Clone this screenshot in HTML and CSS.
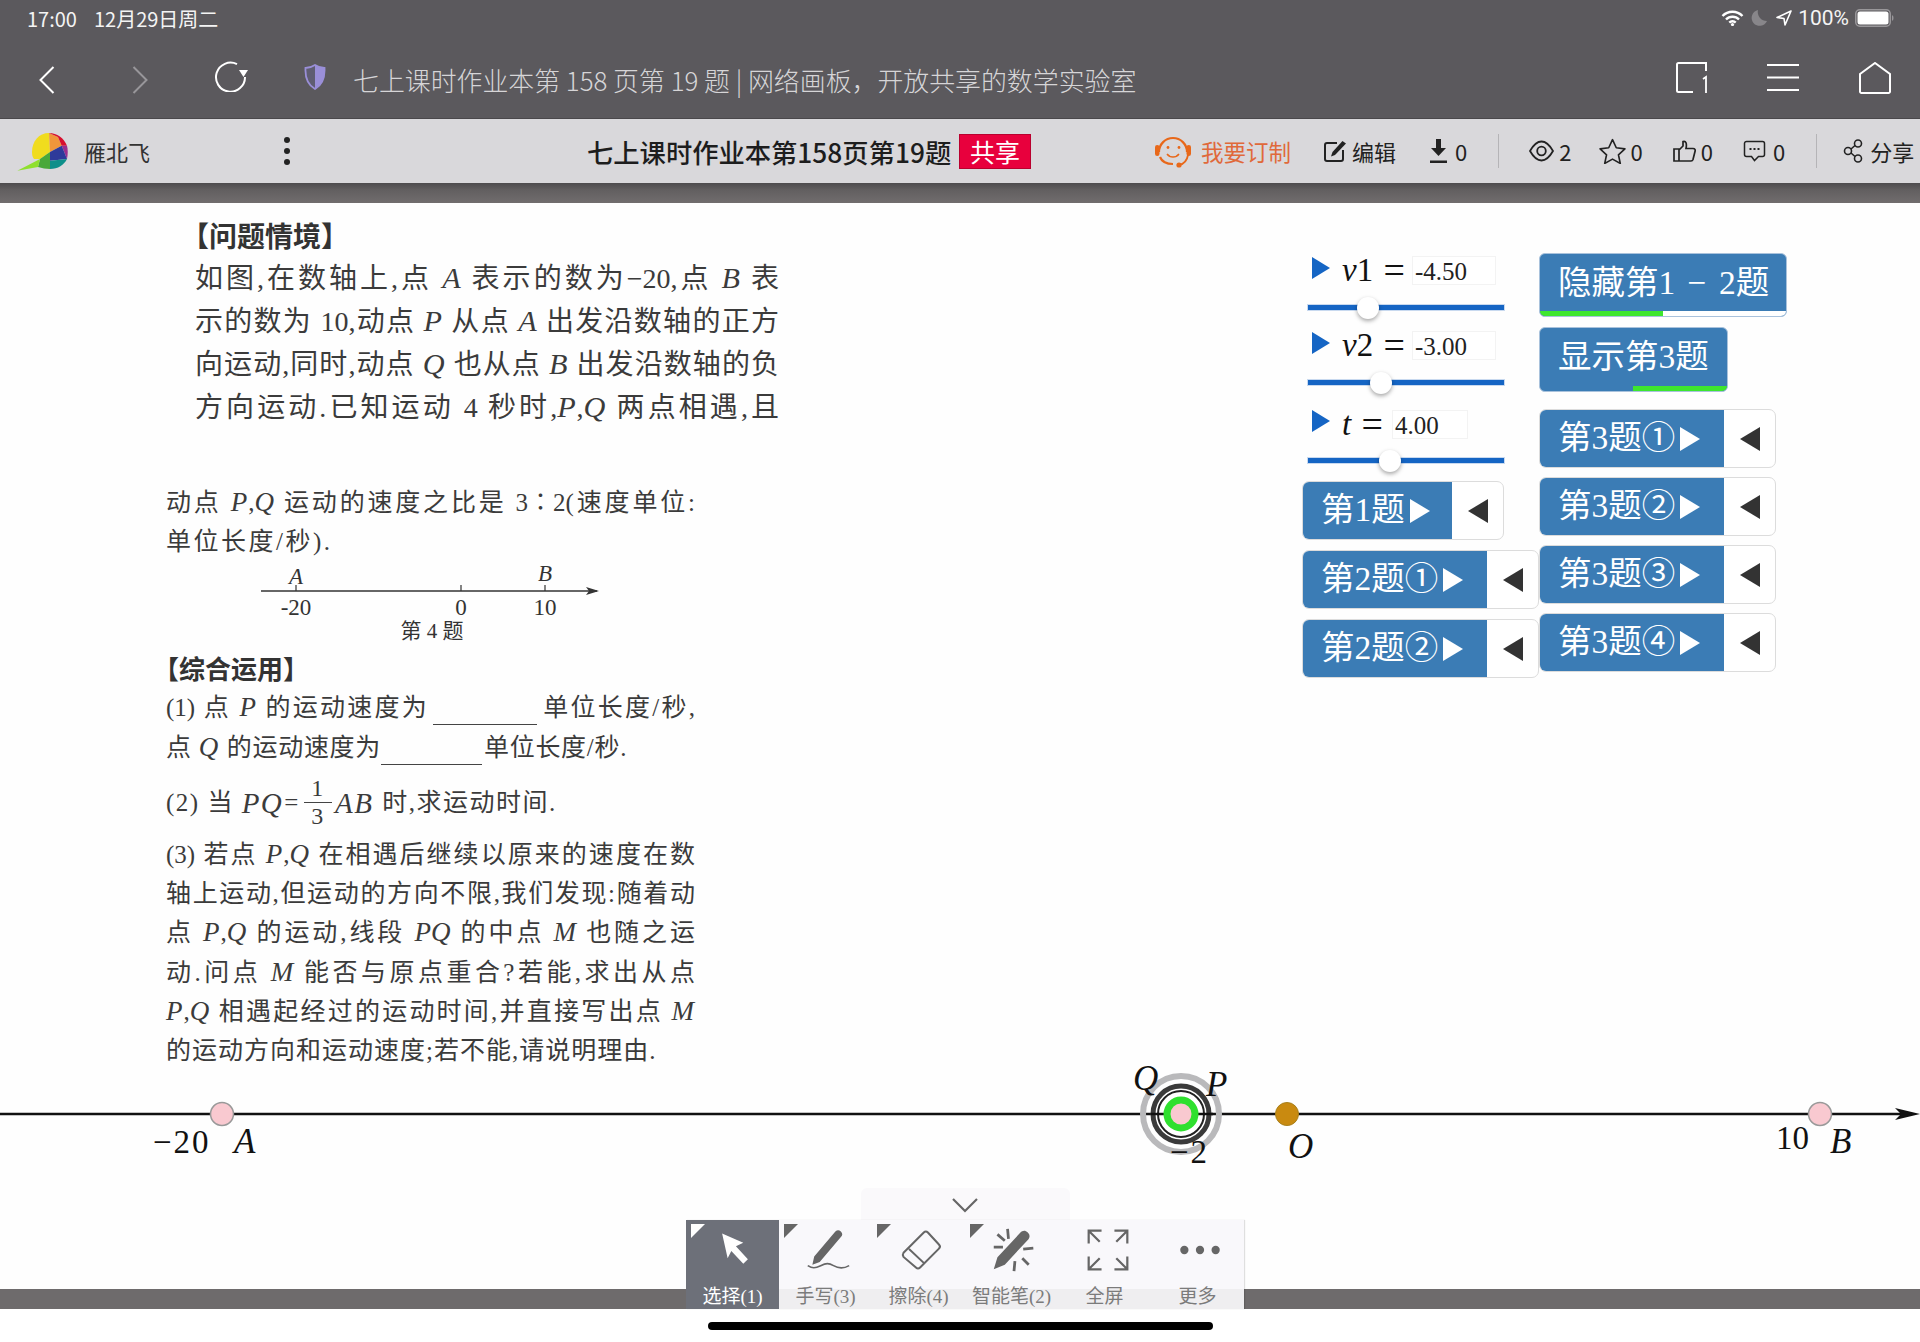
FILE: index.html
```html
<!DOCTYPE html>
<html lang="zh-CN">
<head>
<meta charset="utf-8">
<title>七上课时作业本第158页第19题</title>
<link rel="stylesheet" href="styles.css">
</head>
<body>
<div class="page">
  <header class="browser">
    <div class="status">
      <span class="clock">17:00</span><span class="date">12月29日周二</span>
      <span class="status-right">
        <svg class="ic-wifi" viewBox="0 0 23 16"><path d="M1.500 6a14 14 0 0 1 20 0M5 9.500a9 9 0 0 1 13 0M8.300 12.600a4.500 4.500 0 0 1 6.400 0" fill="none" stroke="#fff" stroke-width="2.400"/><circle cx="11.500" cy="14.500" r="1.600" fill="#fff"/></svg>
        <svg class="ic-moon" viewBox="0 0 16 16"><path d="M7 0a8 8 0 1 0 9 11A9 9 0 0 1 7 0z" fill="#88868a"/></svg>
        <svg class="ic-loc" viewBox="0 0 16 16"><path d="M15 1 1 7.500 8 8.500 9 15z" fill="none" stroke="#fff" stroke-width="1.600" stroke-linejoin="round"/></svg>
        <span class="pct">100%</span>
        <svg class="ic-bat" viewBox="0 0 39 18"><rect x=".75" y=".75" width="34.500" height="16.500" rx="4" fill="none" stroke="#99979a" stroke-width="1.500"/><rect x="2.500" y="2.500" width="31" height="13" rx="2.500" fill="#fff"/><path d="M37 6v6a3 3 0 0 0 1.500-3A3 3 0 0 0 37 6z" fill="#99979a"/></svg>
      </span>
    </div>
    <nav class="nav">
      <svg class="ic-back" viewBox="0 0 16 28"><path d="M14.500 1 1.500 14l13 13" fill="none" stroke="#fff" stroke-width="2"/></svg>
      <svg class="ic-forward" viewBox="0 0 16 28"><path d="M1.500 1l13 13-13 13" fill="none" stroke="#98969a" stroke-width="2"/></svg>
      <svg class="ic-reload" viewBox="0 0 34 32"><path d="M23 4.200A14.500 14.500 0 1 0 31 17" fill="none" stroke="#fff" stroke-width="2"/><path d="M25 10h9l-4.500 7z" fill="#fff"/></svg>
      <svg class="ic-shield" viewBox="0 0 22 26"><path d="M11 1C8 3 4 4 1.500 4 1 13 4 21 11 25c7-4 10-12 9.500-21C18 4 14 3 11 1z" fill="#5f5d72" stroke="#9a8fd8" stroke-width="1.800"/><path d="M11 1c3 2 7 3 9.500 3 .5 9-2.500 17-9.500 21z" fill="#9a8fd8"/></svg>
      <span class="page-title">七上课时作业本第 158 页第 19 题 | 网络画板&#xFF0C;开放共享的数学实验室</span>
      <span class="nav-right">
        <svg class="ic-tabs" viewBox="0 0 31 31"><path d="M30 9V1H2.500A1.500 1.500 0 0 0 1 2.500v26A1.500 1.500 0 0 0 2.500 30H17" fill="none" stroke="#fff" stroke-width="2"/><path d="M27 17l3-2v16" fill="none" stroke="#fff" stroke-width="1.800"/></svg>
        <svg class="ic-menu" viewBox="0 0 32 27"><path d="M0 1h32M0 13.500h32M0 26h32" stroke="#fff" stroke-width="2"/></svg>
        <svg class="ic-home" viewBox="0 0 32 32"><path d="M1 12 16 1l15 11v17.500a1.500 1.500 0 0 1-1.500 1.500h-27A1.500 1.500 0 0 1 1 29.500z" fill="none" stroke="#fff" stroke-width="2"/></svg>
      </span>
    </nav>
  </header>

  <div class="appbar">
    <div class="user">
      <svg class="logo" viewBox="0 0 51 39">
        <path d="M32 1C22 1 15 9 15 20c0 3 .5 5 2 7h6l10-7z" fill="#f0dc1e"/>
        <path d="M32 1l9 4 3.700 8.700L33 20z" fill="#f0963a"/>
        <path d="M32 1c8 0 15 5 18 12.700h-5.300L41 5z" fill="#d8102e"/>
        <path d="M44.700 13.700H50c1 3.300 1 8.300 0 13.300z" fill="#9a2f8f"/>
        <path d="M33 20l11.700-6.300L50 27l-17 1.700z" fill="#2e3a9a"/>
        <path d="M33 28.700 50 27c-3 6-9 10-17 10z" fill="#0d8f8a"/>
        <path d="M23 27l10-7v17c-4 0-8-1-12-2z" fill="#4aa83a"/>
        <path d="M.3 38.700 23 27l-2 8z" fill="#8fe02e"/>
      </svg>
      <span class="username">雁北飞</span>
      <span class="kebab"><i></i><i></i><i></i></span>
    </div>
    <h1 class="app-title">七上课时作业本第158页第19题</h1>
    <span class="badge">共享</span>
    <div class="tools">
      <svg class="ic-face" viewBox="0 0 38 33"><path d="M5 17A14 14 0 1 1 33 17M6 22c2 5 7 7 13 7" fill="none" stroke="#e8681a" stroke-width="2.200"/><path d="M34 20c-1 6-4 9-9 10" fill="none" stroke="#e8681a" stroke-width="1.800"/><rect x="1" y="10" width="4.500" height="11" rx="2.200" fill="#e8681a"/><rect x="32.500" y="10" width="4.500" height="11" rx="2.200" fill="#e8681a"/><circle cx="25" cy="30" r="2.600" fill="#e8681a"/><circle cx="14" cy="12.500" r="1.400" fill="#e8681a"/><circle cx="25" cy="12.500" r="1.400" fill="#e8681a"/><path d="M13 19c3 4 9 4 12 0" fill="none" stroke="#e8681a" stroke-width="1.500"/></svg>
      <span class="custom">我要订制</span>
      <span class="tool edit">
        <svg viewBox="0 0 22 21"><path d="M13 2H3a2 2 0 0 0-2 2v14a2 2 0 0 0 2 2h14a2 2 0 0 0 2-2V9" fill="none" stroke="#222" stroke-width="2"/><path d="M18.500 0 22 2.500 11 14l-4 1.500L8.500 11z" fill="#222"/></svg>
        编辑
      </span>
      <span class="tool dl">
        <svg viewBox="0 0 17 24"><path d="M6 0h5v9h5l-7.500 8L1 9h5zM0 21.500h17V24H0z" fill="#222"/></svg>
        0
      </span>
      <span class="vline"></span>
      <span class="tool stat eye">
        <svg viewBox="0 0 25 22"><path d="M1 11C5 4 8.500 1.500 12.500 1.500S20 4 24 11c-4 7-7.500 9.500-11.500 9.500S5 18 1 11z" fill="none" stroke="#222" stroke-width="1.800" stroke-linejoin="round"/><circle cx="12.500" cy="11" r="4.300" fill="none" stroke="#222" stroke-width="1.800"/></svg>
        2
      </span>
      <span class="tool stat star">
        <svg viewBox="0 0 25 24"><path d="M12.500 1.500 16 9l8 1-6 5.500 1.700 8-7.200-4-7.200 4 1.700-8-6-5.500 8-1z" fill="none" stroke="#222" stroke-width="1.500" stroke-linejoin="round"/></svg>
        0
      </span>
      <span class="tool stat like">
        <svg viewBox="0 0 23 22"><path d="M1 9h5v12H1zM6 10l4-4V1.500c3-1 4 2 3 7h7c2 0 2.500 1.500 2 3l-2 8c-.3 1-1 1.500-2 1.500H6" fill="none" stroke="#222" stroke-width="1.700"/></svg>
        0
      </span>
      <span class="tool stat comment">
        <svg viewBox="0 0 22 22"><path d="M3 1.500h16A2 2 0 0 1 21 3.500v11a2 2 0 0 1-2 2h-4l-4 4-3-4H3a2 2 0 0 1-2-2v-11a2 2 0 0 1 2-2z" fill="none" stroke="#222" stroke-width="1.500"/><path d="M6 9h2M10 9h2M14 9h2" stroke="#222" stroke-width="1.800"/></svg>
        0
      </span>
      <span class="vline"></span>
      <span class="tool share">
        <svg viewBox="0 0 21 24"><circle cx="15" cy="4.500" r="3.500" fill="none" stroke="#222" stroke-width="1.600"/><circle cx="5" cy="12" r="3.500" fill="none" stroke="#222" stroke-width="1.600"/><circle cx="15" cy="19.500" r="3.500" fill="none" stroke="#222" stroke-width="1.600"/><path d="M8 10 12 6.500M8 14l4 3.500" stroke="#222" stroke-width="1.600"/></svg>
        分享
      </span>
    </div>
  </div>
  <div class="strip"></div>

  <main class="canvas">
    <section class="book">
      <div class="intro">
        <h2 class="sec big">【问题情境】</h2>
        <p class="jl">如图,在数轴上,点 <i>A</i> 表示的数为−20,点 <i>B</i> 表</p>
        <p class="jl">示的数为 10,动点 <i>P</i> 从点 <i>A</i> 出发沿数轴的正方</p>
        <p class="jl">向运动,同时,动点 <i>Q</i> 也从点 <i>B</i> 出发沿数轴的负</p>
        <p class="jl">方向运动.已知运动 4 秒时,<i>P</i>,<i>Q</i> 两点相遇,且</p>
      </div>
      <div class="body">
        <p class="jl first">动点 <i>P</i>,<i>Q</i> 运动的速度之比是 3∶2(速度单位:</p>
        <p class="wider">单位长度/秒).</p>
        <svg class="figure" viewBox="0 563 560 82">
          <path d="M95 592H431" stroke="#333" stroke-width="1.500"/>
          <path d="M130 592v-6M295 592v-6M379 592v-6" stroke="#333" stroke-width="1.200"/>
          <path d="M433 592l-13-4 3 4-3 4z" fill="#333"/>
          <text class="fig it" x="130" y="585" text-anchor="middle">A</text>
          <text class="fig it" x="379" y="582" text-anchor="middle">B</text>
          <text class="fig" x="130" y="616" text-anchor="middle">-20</text>
          <text class="fig" x="295" y="616" text-anchor="middle">0</text>
          <text class="fig" x="379" y="616" text-anchor="middle">10</text>
          <text class="fig cap" x="266" y="639" text-anchor="middle">第 4 题</text>
        </svg>
        <h2 class="sec">【综合运用】</h2>
        <p class="jl q1">(1) 点 <i>P</i> 的运动速度为<span class="blank b1"></span>单位长度/秒,</p>
        <p class="q1b">点 <i>Q</i> 的运动速度为<span class="blank b2"></span>单位长度/秒.</p>
        <p class="q2">(2) 当 <i>PQ</i>=<span class="frac"><span>1</span><span>3</span></span><i>AB</i> 时,求运动时间.</p>
        <div class="q3">
          <p class="jl">(3) 若点 <i>P</i>,<i>Q</i> 在相遇后继续以原来的速度在数</p>
          <p class="jl">轴上运动,但运动的方向不限,我们发现:随着动</p>
          <p class="jl">点 <i>P</i>,<i>Q</i> 的运动,线段 <i>PQ</i> 的中点 <i>M</i> 也随之运</p>
          <p class="jl">动.问点 <i>M</i> 能否与原点重合?若能,求出从点</p>
          <p class="jl"><i>P</i>,<i>Q</i> 相遇起经过的运动时间,并直接写出点 <i>M</i></p>
          <p class="loose">的运动方向和运动速度;若不能,请说明理由.</p>
        </div>
      </div>
    </section>

    <svg class="axis" viewBox="0 203 1920 1106">
      <path d="M0 1114H1905" stroke="#111" stroke-width="2.500"/>
      <path d="M1920 1114l-25-6 6 6-6 6z" fill="#111"/>
      <circle cx="222" cy="1114" r="11.500" fill="#f9c9d0" stroke="#999" stroke-width="1.500"/>
      <circle cx="1820" cy="1114" r="11.500" fill="#f9c9d0" stroke="#999" stroke-width="1.500"/>
      <circle cx="1287" cy="1114" r="11.500" fill="#c98a10" stroke="#a8801c" stroke-width="1"/>
      <circle cx="1181" cy="1114" r="38" fill="none" stroke="#b9b9bb" stroke-width="6"/>
      <circle cx="1181" cy="1114" r="28" fill="#fff" stroke="#3a3a3a" stroke-width="5"/>
      <circle cx="1181" cy="1114" r="23" fill="#fff" stroke="#222" stroke-width="2"/>
      <path d="M1151 1114H1213" stroke="#111" stroke-width="2.500"/>
      <circle cx="1181" cy="1114" r="14" fill="#f9c9d0" stroke="#2fe02f" stroke-width="7"/>
      <text class="lb neg" x="153" y="1153">−20</text>
      <text class="lb it" x="234" y="1153">A</text>
      <text class="lb it" x="1133" y="1090">Q</text>
      <text class="lb it" x="1206" y="1096">P</text>
      <text class="lb neg" x="1170" y="1163">−2</text>
      <text class="lb it" x="1288" y="1158">O</text>
      <text class="lb" x="1776" y="1149">10</text>
      <text class="lb it" x="1830" y="1153">B</text>
    </svg>

    <div class="panel">
      <div class="col-left">
        <div class="slider s1">
          <div class="slider-row"><span class="play"></span><span class="eq"><i>v</i>1 <span class="eqs">=</span></span><span class="val">-4.50</span></div>
          <div class="track"><span class="knob" style="left:49px"></span></div>
        </div>
        <div class="slider s2">
          <div class="slider-row"><span class="play"></span><span class="eq"><i>v</i>2 <span class="eqs">=</span></span><span class="val">-3.00</span></div>
          <div class="track"><span class="knob" style="left:62px"></span></div>
        </div>
        <div class="slider s3">
          <div class="slider-row"><span class="play"></span><span class="eq"><i>t</i> <span class="eqs">=</span></span><span class="val short">4.00</span></div>
          <div class="track"><span class="knob" style="left:71px"></span></div>
        </div>
        <div class="stepper wide-1"><span class="step-main">第1题<b class="tri-r"></b></span><span class="step-back"><b class="tri-l"></b></span></div>
        <div class="stepper wide-2"><span class="step-main">第2题①<b class="tri-r"></b></span><span class="step-back"><b class="tri-l"></b></span></div>
        <div class="stepper wide-2"><span class="step-main">第2题②<b class="tri-r"></b></span><span class="step-back"><b class="tri-l"></b></span></div>
      </div>
      <div class="col-right">
        <button class="toggle t-hide">隐藏第1 − 2题<span class="bar bar-left"></span></button>
        <button class="toggle t-show">显示第3题<span class="bar bar-right"></span></button>
        <div class="stepper wide-3 first3"><span class="step-main">第3题①<b class="tri-r"></b></span><span class="step-back"><b class="tri-l"></b></span></div>
        <div class="stepper wide-3"><span class="step-main">第3题②<b class="tri-r"></b></span><span class="step-back"><b class="tri-l"></b></span></div>
        <div class="stepper wide-3"><span class="step-main">第3题③<b class="tri-r"></b></span><span class="step-back"><b class="tri-l"></b></span></div>
        <div class="stepper wide-3"><span class="step-main">第3题④<b class="tri-r"></b></span><span class="step-back"><b class="tri-l"></b></span></div>
      </div>
    </div>

    <div class="graybar"></div>

    <div class="dock">
      <div class="dock-tab"><svg viewBox="0 0 26 15"><path d="M1 1l12 12L25 1" fill="none" stroke="#666" stroke-width="2.200"/></svg></div>
      <div class="dock-items">
        <div class="dock-item active"><span class="corner"></span>
          <svg viewBox="0 0 50 50"><path d="M11 7l23 10-8 4 13 14-5 5-13-14-4 8z" fill="#fff"/></svg>
          <span>选择(1)</span></div>
        <div class="dock-item"><span class="corner"></span>
          <svg viewBox="0 0 50 50"><path d="M10 32 33 5c2-2 4-2 6 0s2 4 0 6L16 38l-8 3z" fill="#666"/><path d="M3 42c5 3 8 3 14 0s9-3 14 0 10 4 17 0" fill="none" stroke="#666" stroke-width="1.800"/></svg>
          <span>手写(3)</span></div>
        <div class="dock-item"><span class="corner"></span>
          <svg viewBox="0 0 50 50"><path d="M6 28 28 6c1.500-1.500 3-1.500 4.500 0l12 13c1.500 1.500 1.500 3 0 4.500L24 44c-1.500 1.500-3 1.500-4.500 0L6 32.500c-1-1.500-1-3 0-4.500zM12 24l16 15" fill="none" stroke="#666" stroke-width="2.200"/></svg>
          <span>擦除(4)</span></div>
        <div class="dock-item"><span class="corner"></span>
          <svg viewBox="0 0 50 50"><path d="M3 46l4-13L32 6c2-2 5-3 8 0s2 6 0 8L15 41z" fill="#666"/><path d="M18 2l1 11M7 8l8 7M3 22h10M46 23l-11 1M25 48l1-11M41 41l-7-7" stroke="#666" stroke-width="3"/></svg>
          <span>智能笔(2)</span></div>
        <div class="dock-item full"><svg viewBox="0 0 50 50"><path d="M4 18V4h14M4 4l12 12M32 4h14v14M46 4 34 16M4 32v14h14M4 46l12-12M46 32v14H32M46 46 34 34" fill="none" stroke="#666" stroke-width="2.400"/></svg>
          <span>全屏</span></div>
        <div class="dock-item"><svg viewBox="0 0 50 50"><circle cx="8" cy="25" r="4.500" fill="#666"/><circle cx="25" cy="25" r="4.500" fill="#666"/><circle cx="42" cy="25" r="4.500" fill="#666"/></svg>
          <span>更多</span></div>
      </div>
    </div>
  </main>
  <footer class="homebar"><span></span></footer>
</div>
</body>
</html>
```
FILE: styles.css
```css
* { box-sizing: border-box; }
html, body { margin: 0; padding: 0; }
body { background: #fff; font-family: "Noto Sans CJK SC", "Noto Sans", sans-serif; }
p, h1, h2 { margin: 0; font-weight: 400; }
.page { width: 1920px; height: 1342px; display: flex; flex-direction: column; overflow: hidden; }

/* Browser chrome */
.browser { background: #5b595d; height: 119px; border-bottom: 1px solid #4a484b; flex: none; }
.status { height: 38px; display: flex; align-items: center; padding: 0 26px 2px 27px; color: #f4f4f4; font-size: 20px; }
.date { margin-left: 17px; }
.status-right { margin-left: auto; display: flex; align-items: center; }
.ic-wifi { width: 23px; height: 16px; }
.ic-moon { width: 16px; height: 16px; margin-left: 7px; }
.ic-loc { width: 16px; height: 16px; margin-left: 9px; }
.pct { margin-left: 6px; font-size: 21px; font-family: "Roboto", sans-serif; }
.ic-bat { width: 39px; height: 18px; margin-left: 6px; }
.nav { height: 80px; display: flex; align-items: center; padding: 0 29px 0 39px; }
.nav svg { flex: none; }
.ic-back, .ic-forward { width: 16px; height: 28px; margin-top: 3px; }
.ic-forward { margin-left: 77px; }
.ic-reload { width: 34px; height: 32px; margin-left: 66px; margin-top: -4px; }
.ic-shield { width: 22px; height: 26px; margin-left: 56px; margin-top: -2px; }
.page-title { margin-left: 27px; font-size: 25.900px; color: #d6d5d7; white-space: nowrap; font-weight: 300; padding-top: 2px; }
.nav-right { margin-left: auto; display: flex; align-items: center; margin-top: -1px; }
.ic-tabs { width: 31px; height: 31px; }
.ic-menu { width: 32px; height: 27px; margin-left: 60px; }
.ic-home { width: 32px; height: 32px; margin-left: 60px; }

/* App bar */
.appbar { height: 64px; background: #d9d8db; display: flex; align-items: center; color: #222; flex: none; }
.user { width: 587px; flex: none; display: flex; align-items: center; padding-left: 17px; }
.logo { width: 51px; height: 39px; flex: none; }
.username { margin-left: 16px; font-size: 22px; color: #333; }
.kebab { margin-left: 134px; display: flex; flex-direction: column; gap: 5px; }
.kebab i { width: 6px; height: 6px; border-radius: 50%; background: #222; display: block; }
.app-title { font-size: 26.300px; font-weight: 500; white-space: nowrap; width: 372px; flex: none; color: #1d1d1d; }
.badge { width: 72px; height: 35px; background: #e8003d; color: #fff; font-size: 25px; line-height: 33px; text-align: center; flex: none; border: 1px solid #b9002e; }
.tools { display: flex; align-items: center; margin-left: 123px; font-size: 22px; flex: none; }
.ic-face { width: 38px; height: 33px; }
.custom { margin-left: 9px; color: #e0693a; font-size: 22.500px; white-space: nowrap; }
.tool { display: flex; align-items: center; white-space: nowrap; }
.tool svg { flex: none; }
.edit { margin-left: 33px; gap: 6px; }
.edit svg { width: 22px; height: 21px; }
.dl { margin-left: 34px; gap: 8px; }
.dl svg { width: 17px; height: 24px; }
.vline { width: 1px; height: 34px; background: #b5b4b7; margin-left: 31px; }
.stat { margin-left: 30px; gap: 5px; }
.eye svg { width: 25px; height: 22px; }
.star { margin-left: 28px; gap: 4px; }
.star svg { width: 27px; height: 26px; }
.like svg { width: 23px; height: 22px; }
.comment { gap: 7px; }
.comment svg { width: 23px; height: 22px; }
.share { margin-left: 26px; gap: 6px; }
.share svg { width: 21px; height: 24px; }
.strip { height: 20px; flex: none; background: linear-gradient(#4d4b4d, #625f60 35%, #716d6e); }

/* Canvas */
.canvas { position: relative; flex: 1; background: #fefefe; }
.axis { position: absolute; left: 0; top: 0; width: 1920px; height: 1106px; }
.lb { font: 33px "Liberation Serif", serif; fill: #111; }
.lb.it { font-style: italic; font-size: 35px; }
.lb.neg { letter-spacing: 2px; }

/* Scanned textbook page */
.book { position: absolute; left: 166px; top: 0; width: 640px; font-family: "Liberation Serif", "Noto Sans CJK SC", serif; color: #3b3b3b; }
.book i { font-style: italic; font-size: 1.080em; margin-right: 1px; line-height: 0; }
.intro { width: 584px; margin-left: 29px; padding-top: 20px; font-size: 28px; line-height: 43px; white-space: nowrap; }
.sec { font-size: 26px; line-height: 30px; text-indent: -13px; font-weight: 700; color: #333; }
.sec.big { font-size: 28px; margin-bottom: 4px; text-indent: -14px; }
.jl { text-align: justify; text-align-last: justify; }
.body { width: 529px; margin-top: 54px; font-size: 25px; line-height: 40px; white-space: nowrap; }
.loose { letter-spacing: 1px; }
.q1b { letter-spacing: .7px; }
.wider { letter-spacing: 2.500px; margin-top: -1px; }
.figure { display: block; width: 560px; height: 82px; }
.fig { font: 23px "Liberation Serif", "Noto Sans CJK SC", serif; fill: #333; }
.fig.it { font-style: italic; }
.fig.cap { font-size: 21px; }
.body .sec { margin-top: 12px; margin-bottom: 2px; }
.blank { display: inline-block; vertical-align: -9px; border-bottom: 1.500px solid #444; height: 20px; }
.b1 { width: 104px; margin: 0 4px; }
.b2 { width: 101px; margin: 0 2px 0 0; }
.q2 { line-height: 54px; margin-top: 7px; display: flex; align-items: center; white-space: pre; letter-spacing: 1.500px; }
.book .q2 i { font-size: 29px; }
.frac { display: inline-flex; flex-direction: column; align-items: center; width: 28px; line-height: 27px; font-size: 24px; margin: 0 3px 0 4px; }
.frac span:first-child { border-bottom: 1.500px solid #444; width: 100%; text-align: center; }
.q3 { margin-top: 5px; line-height: 39.200px; }

/* Applet controls */
.panel { position: absolute; left: 1302px; top: 50px; display: flex; align-items: flex-start; }
.col-left { width: 237px; display: flex; flex-direction: column; padding-top: 3px; }
.col-right { display: flex; flex-direction: column; }
.slider { padding-left: 6px; }
.s1 { height: 75px; }
.s2 { height: 79px; }
.s3 { height: 71px; }
.slider-row { display: flex; align-items: center; height: 29px; font-family: "Liberation Serif", serif; }
.s3 .slider-row { height: 28px; }
.play { width: 0; height: 0; border-left: 18px solid #1565c4; border-top: 11px solid transparent; border-bottom: 11px solid transparent; margin-left: 4px; margin-top: -6px; }
.eq { margin-left: 12px; font-size: 33px; color: #111; white-space: pre; width: 70px; line-height: 29px; }
.eqs { font-size: 38px; line-height: 0; vertical-align: -2px; margin-left: 2px; }
.s3 .eq { width: 50px; }
.val { width: 84px; height: 29px; border: 1px solid #f3f3f3; font-size: 25px; line-height: 29px; padding-left: 2px; color: #222; background: #fff; }
.val.short { width: 76px; }
.track { position: relative; width: 196px; height: 5px; background: #1565c4; margin-top: 20px; box-shadow: 0 0 0 1px #c8d9ef; }
.knob { position: absolute; top: -8.500px; width: 22px; height: 22px; border-radius: 50%; background: #fff; box-shadow: 0 2px 4px rgba(0,0,0,.35); }

.stepper { display: flex; height: 59px; border: 1px solid #dcdcdc; border-radius: 7px; overflow: hidden; background: #fff; margin-bottom: 10px; }
.step-main { background: #3b7cb5; color: #fff; display: flex; align-items: center; padding: 0 0 9px 18px; font: 33.500px "Liberation Serif", "Noto Sans CJK SC", serif; white-space: nowrap; flex: none; }
.step-back { flex: 1; display: flex; align-items: center; justify-content: center; }
.tri-r { width: 0; height: 0; border-left: 20px solid #fff; border-top: 12.500px solid transparent; border-bottom: 12.500px solid transparent; margin: 9px 0 0 5px; }
.tri-l { width: 0; height: 0; border-right: 20px solid #333; border-top: 12.500px solid transparent; border-bottom: 12.500px solid transparent; }
.wide-1 { width: 202px; }
.wide-1 .step-main { width: 149px; }
.wide-2 { width: 237px; }
.wide-2 .step-main { width: 184px; }
.wide-3 { width: 237px; margin-bottom: 9px; }
.wide-3 .step-main { width: 184px; }
.first3 { margin-top: 7px; }

.toggle { position: relative; display: block; border: 1px solid #a9c2dc; border-radius: 6px; background: #3b7cb5; color: #fff; font: 33.500px "Liberation Serif", "Noto Sans CJK SC", serif; text-align: left; padding: 0 0 12px 18px; overflow: hidden; white-space: pre; margin-bottom: 10px; word-spacing: 4px; }
.t-hide { width: 248px; height: 64px; }
.t-show { width: 189px; height: 65px; }
.bar { position: absolute; bottom: 0; height: 5px; }
.bar-left { left: 0; right: 0; background: linear-gradient(90deg, #3ee62e 50%, #fff 50%); }
.bar-right { right: 0; width: 94px; background: #3ee62e; }

/* Bottom dock */
.graybar { position: absolute; left: 0; right: 0; bottom: 0; height: 20px; background: #6e6b6c; }
.dock { position: absolute; left: 686px; bottom: 0; width: 558px; display: flex; flex-direction: column; align-items: center; }
.dock-tab { width: 209px; height: 32px; background: #faf9fb; border-radius: 6px 6px 0 0; display: flex; justify-content: center; padding-top: 10px; }
.dock-tab svg { width: 26px; height: 15px; }
.dock-items { width: 558px; height: 89px; display: flex; background: linear-gradient(#f9f8fb 77%, #efeef0 77%); box-shadow: 1px 0 1px rgba(0,0,0,.12); }
.dock-item { position: relative; width: 93px; display: flex; flex-direction: column; align-items: center; color: #7b7b7b; font: 19px "Liberation Serif", "Noto Sans CJK SC", serif; white-space: nowrap; }
.dock-item svg { width: 46px; height: 46px; margin: 7px 0 0 4px; }
.dock-item.full svg { margin-left: 7px; }
.dock-item > span:last-child { margin-top: 12px; line-height: 24px; }
.dock-item.active { background: #6d7079; color: #fff; }
.corner { position: absolute; left: 5px; top: 4px; width: 0; height: 0; border-top: 14px solid #666; border-right: 14px solid transparent; }
.active .corner { border-top-color: #fff; }

.homebar { height: 33px; flex: none; padding-top: 13px; display: flex; justify-content: center; background: #fff; }
.homebar span { width: 505px; height: 8px; border-radius: 4px; background: #000; }
```
